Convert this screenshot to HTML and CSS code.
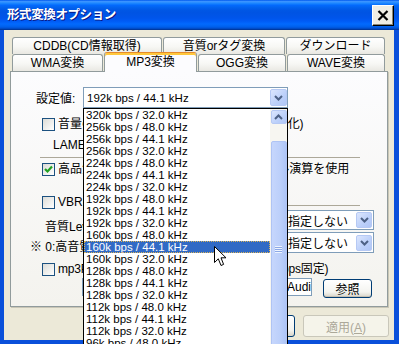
FILE: index.html
```html
<!DOCTYPE html>
<html>
<head>
<meta charset="utf-8">
<title>形式変換オプション</title>
<link rel="stylesheet" href="styles.css">
</head>
<body>
<div class="window">
  <div class="titlebar">
    <span class="title">形式変換オプション</span>
    <span class="close-btn">
      <svg width="12" height="11" viewBox="0 0 12 11"><path d="M1.5 1 L10.5 10 M10.5 1 L1.5 10" stroke="#000" stroke-width="2.2"/></svg>
    </span>
  </div>

  <div class="client">
    <div class="tabs">
      <div class="tab-row">
        <div class="tab w-cddb">CDDB(CD情報取得)</div>
        <div class="tab w-tag">音質orタグ変換</div>
        <div class="tab w-dl">ダウンロード</div>
      </div>
      <div class="tab-row">
        <div class="tab w-wma">WMA変換</div>
        <div class="tab w-mp3 active">MP3変換</div>
        <div class="tab w-ogg">OGG変換</div>
        <div class="tab w-wave">WAVE変換</div>
      </div>
    </div>

    <div class="panel">
      <div class="setting-row">
        <span class="setting-label">設定値:</span>
        <div class="combo combo-main">
          <span class="combo-text">192k bps / 44.1 kHz</span>
          <span class="combo-arrow"><svg width="9" height="6" viewBox="0 0 9 6"><path d="M1 1 L4.5 4.5 L8 1" stroke="#4D6185" stroke-width="2" fill="none"/></svg></span>
        </div>
      </div>

      <div class="check-row row-normalize">
        <span class="check"></span>
        <span class="check-text tight">音量の正規化処理を自動実行(ノーマライズ化)</span>
      </div>

      <div class="group-label">LAMEエンコーダ設定</div>
      <div class="sep"></div>

      <div class="check-row row-quality">
        <span class="check checked"><svg width="11" height="11" viewBox="0 0 11 11"><path d="M2 5 L4.5 7.5 L9 2.5" stroke="#21A121" stroke-width="2.2" fill="none"/></svg></span>
        <span class="check-text">高品質モードで変換する 浮動小数点のフル演算を使用</span>
      </div>

      <div class="check-row row-vbr">
        <span class="check"></span>
        <span class="check-text">VBR(可変ビットレート)</span>
        <span class="sep-fill"></span>
      </div>

      <div class="level-block">
        <div class="level-labels">
          <div class="level-label">音質Level (VBR時)</div>
          <div class="level-note">※ 0:高音質 ～ 9:低音質</div>
        </div>
        <div class="level-combos">
          <div class="combo combo-small">
            <span class="combo-text">指定しない</span>
            <span class="combo-arrow"><svg width="9" height="6" viewBox="0 0 9 6"><path d="M1 1 L4.5 4.5 L8 1" stroke="#4D6185" stroke-width="2" fill="none"/></svg></span>
          </div>
          <div class="combo combo-small tall">
            <span class="combo-text">指定しない</span>
            <span class="combo-arrow"><svg width="9" height="6" viewBox="0 0 9 6"><path d="M1 1 L4.5 4.5 L8 1" stroke="#4D6185" stroke-width="2" fill="none"/></svg></span>
          </div>
        </div>
      </div>

      <div class="check-row row-mp3pro">
        <span class="check"></span>
        <span class="check-text snug">mp3PROでエンコード(ビットレートは64kbps固定)</span>
      </div>

      <div class="path-row">
        <div class="path-input"><span>C:\Program Files\Thomson\mp3PRO Audi</span></div>
        <button class="btn btn-browse">参照</button>
      </div>
    </div>

    <div class="buttons">
      <button class="btn">OK</button>
      <button class="btn">キャンセル</button>
      <button class="btn disabled">適用(<u>A</u>)</button>
    </div>
  </div>

  <!-- open dropdown of 設定値 -->
  <div class="droplist">
    <div class="items">
      <div class="item">320k bps / 32.0 kHz</div>
      <div class="item">256k bps / 48.0 kHz</div>
      <div class="item">256k bps / 44.1 kHz</div>
      <div class="item">256k bps / 32.0 kHz</div>
      <div class="item">224k bps / 48.0 kHz</div>
      <div class="item">224k bps / 44.1 kHz</div>
      <div class="item">224k bps / 32.0 kHz</div>
      <div class="item">192k bps / 48.0 kHz</div>
      <div class="item">192k bps / 44.1 kHz</div>
      <div class="item">192k bps / 32.0 kHz</div>
      <div class="item">160k bps / 48.0 kHz</div>
      <div class="item selected">160k bps / 44.1 kHz</div>
      <div class="item">160k bps / 32.0 kHz</div>
      <div class="item">128k bps / 48.0 kHz</div>
      <div class="item">128k bps / 44.1 kHz</div>
      <div class="item">128k bps / 32.0 kHz</div>
      <div class="item">112k bps / 48.0 kHz</div>
      <div class="item">112k bps / 44.1 kHz</div>
      <div class="item">112k bps / 32.0 kHz</div>
      <div class="item">96k bps / 48.0 kHz</div>
    </div>
    <div class="scrollbar">
      <div class="sb-up"><svg width="9" height="6" viewBox="0 0 9 6"><path d="M1 5 L4.5 1.5 L8 5" stroke="#4D6185" stroke-width="2" fill="none"/></svg></div>
      <div class="sb-thumb"><span class="grip"></span></div>
    </div>
  </div>

  <svg class="cursor" width="13" height="21" viewBox="0 0 13 21">
    <path d="M0.5 0.5 L0.5 16.5 L4.3 12.8 L7 19.5 L9.6 18.4 L7 11.8 L12 11.8 Z" fill="#fff" stroke="#000" stroke-width="1"/>
  </svg>
</div>
</body>
</html>
```

FILE: styles.css
```css
body {
    margin: 0;
    font-family: "Liberation Sans", "Noto Sans CJK JP", sans-serif;
    font-size: 12px;
    color: #000;
}

.window {
    position: relative;
    width: 399px;
    height: 344px;
    overflow: hidden;
    background: #0A50DA;
    display: flex;
    flex-direction: column;
}

/* title bar */
.titlebar {
    height: 30px;
    flex: none;
    display: flex;
    align-items: flex-start;
    background: linear-gradient(#0058EE 0%, #3A93FF 5%, #288EFF 9%, #127DFF 13%, #0369FC 18%, #0262EE 25%, #0057E5 34%, #0054E3 42%, #0055EB 60%, #005BF5 70%, #026AFE 80%, #0062EF 88%, #0052D6 94%, #0040AB 97%, #003092 100%);
}

.title {
    color: #fff;
    font-family: "Noto Sans CJK JP", sans-serif;
    font-weight: bold;
    font-size: 12.5px;
    line-height: 16px;
    padding: 6px 0 0 7px;
    letter-spacing: -0.4px;
    text-shadow: 1px 1px #0A1883;
}

.close-btn {
    margin: 5px 5px 0 auto;
    width: 22px;
    height: 21px;
    box-sizing: border-box;
    background: #EFEDE4;
    border: 1px solid #fff;
    border-right-color: #000;
    border-bottom-color: #000;
    box-shadow: inset -1px -1px #8A8778;
    display: flex;
    align-items: center;
    justify-content: center;
}

/* client area */
.client {
    flex: 1;
    margin: 0 5px 4px 4px;
    background: #ECE9D8;
    padding: 7px 6px 0;
}

.tabs {
    padding-left: 2px;
}

.tab-row {
    display: flex;
    gap: 1px;
    height: 17px;
    align-items: flex-start;
}

.tab {
    box-sizing: border-box;
    height: 17px;
    border: 1px solid #919B9C;
    border-bottom: none;
    border-radius: 3px 3px 0 0;
    background: linear-gradient(#FFFFFF, #F7F7F4 55%, #E9E8E2);
    text-align: center;
    line-height: 16px;
    white-space: nowrap;
}

.tab.active {
    position: relative;
    z-index: 2;
    height: 20px;
    margin-top: -2px;
    padding-top: 1px;
    background: #FCFCFE;
    border-top-color: #E68B2C;
    box-shadow: inset 0 2px #FFC83C;
}

.w-cddb { width: 150px; }
.w-tag { width: 122px; }
.w-dl { width: 99px; }
.w-wma { width: 91px; }
.w-mp3 { width: 93px; }
.w-ogg { width: 88px; }
.w-wave { width: 98px; }

.panel {
    box-sizing: border-box;
    height: 236px;
    border: 1px solid #919B9C;
    background: linear-gradient(#FCFCFE, #F4F3EE);
    box-shadow: 1px 1px 0 #C9C6B6;
}

/* rows inside the MP3 tab */
.setting-row {
    display: flex;
    align-items: center;
    margin-top: 15px;
    height: 21px;
}

.setting-label {
    margin-left: 25px;
    width: 47px;
    flex: none;
}

.combo {
    box-sizing: border-box;
    display: flex;
    align-items: center;
    background: #fff;
    border: 1px solid #7F9DB9;
}

.combo-main {
    width: 205px;
    height: 21px;
}

.combo-main .combo-text {
    padding-left: 3px;
    font-size: 11.5px;
}

.combo-text {
    flex: 1;
    white-space: nowrap;
    overflow: hidden;
}

.combo-arrow {
    box-sizing: border-box;
    width: 17px;
    height: 17px;
    flex: none;
    border: 1px solid #B6C9F4;
    border-radius: 2px;
    background: linear-gradient(135deg, #DCE6FD, #BCD0FA 60%, #B0C6F6);
    display: flex;
    align-items: center;
    justify-content: center;
}

.check-row {
    display: flex;
    align-items: flex-start;
    height: 13px;
    line-height: 13px;
    white-space: nowrap;
}

.check {
    box-sizing: border-box;
    width: 13px;
    height: 13px;
    flex: none;
    margin-left: 31px;
    border: 1px solid #1C5180;
    background: linear-gradient(135deg, #DCDCD7, #FFFFFF);
    display: flex;
    align-items: center;
    justify-content: center;
}

.check-text {
    margin-left: 3px;
}

.check-text.tight {
    letter-spacing: -0.1px;
}

.check-text.snug {
    letter-spacing: -0.2px;
}

.row-normalize { margin-top: 10px; }
.row-quality { margin-top: 5px; }
.row-vbr { margin-top: 20px; }
.row-mp3pro { margin-top: 9px; }

.group-label {
    margin: 8px 0 0 42px;
    height: 13px;
    line-height: 13px;
}

.sep {
    margin: 5px 0 0 29px;
    width: 320px;
    border-top: 1px solid #ACA899;
}

.sep-fill {
    flex: 1;
    margin: 9px 27px 0 4px;
    border-top: 1px solid #ACA899;
}

.level-block {
    display: flex;
    margin-top: 1px;
}

.level-labels {
    flex: 1;
    white-space: nowrap;
}

.level-label {
    margin: 10px 0 0 34px;
    line-height: 14px;
}

.level-note {
    margin: 6px 0 0 19px;
    line-height: 14px;
}

.level-combos {
    width: 89px;
    margin-right: 13px;
    display: flex;
    flex-direction: column;
    gap: 2px;
}

.combo-small {
    height: 20px;
}

.combo-small.tall {
    height: 21px;
}

.combo-small .combo-text {
    padding-left: 2px;
}

.combo-small .combo-arrow {
    width: 16px;
    height: 16px;
    margin-right: 1px;
}

.path-row {
    display: flex;
    align-items: flex-start;
    margin-top: 2px;
}

.path-input {
    box-sizing: border-box;
    width: 230px;
    height: 18px;
    margin-left: 71px;
    border: 1px solid #7F9DB9;
    background: #fff;
    display: flex;
    justify-content: flex-end;
    overflow: hidden;
    white-space: nowrap;
    line-height: 16px;
}

.btn {
    box-sizing: border-box;
    width: 86px;
    height: 22px;
    padding: 0;
    border: 1px solid #003C74;
    border-radius: 3px;
    background: linear-gradient(#FFFFFF, #F4F4F0 70%, #D8D4C8);
    font-family: "Liberation Sans", "Noto Sans CJK JP", sans-serif;
    font-size: 12px;
    color: #000;
}

.btn-browse {
    width: 49px;
    height: 19px;
    margin: 1px 0 0 11px;
    box-shadow: inset 0 -1px #C4BFB2;
}

.btn.disabled {
    border-color: #C9C7BA;
    background: #F5F4EA;
    color: #ACA899;
}

.buttons {
    display: flex;
    justify-content: flex-end;
    gap: 8px;
    margin: 8px -1px 0 0;
}

/* open dropdown list */
.droplist {
    position: absolute;
    left: 83px;
    top: 108px;
    width: 205px;
    height: 250px;
    box-sizing: border-box;
    border: 1px solid #000;
    background: #fff;
    display: flex;
    z-index: 5;
}

.items {
    flex: 1;
    overflow: hidden;
    font-size: 11.5px;
}

.item {
    height: 12px;
    line-height: 12px;
    padding-left: 2px;
    white-space: nowrap;
}

.item.selected {
    background: #316AC5;
    color: #fff;
    outline: 1px dotted #D9B35A;
    outline-offset: -1px;
}

.scrollbar {
    width: 17px;
    flex: none;
    background: #F7F6F1;
    display: flex;
    flex-direction: column;
    align-items: center;
}

.sb-up {
    box-sizing: border-box;
    width: 16px;
    height: 15px;
    margin-top: 1px;
    border: 1px solid #B6C9F4;
    border-radius: 2px;
    background: linear-gradient(135deg, #DCE6FD, #BCD0FA 60%, #B0C6F6);
    display: flex;
    align-items: center;
    justify-content: center;
}

.sb-thumb {
    box-sizing: border-box;
    width: 16px;
    height: 232px;
    margin-top: 17px;
    border: 1px solid #AFC4F4;
    border-radius: 2px;
    background: linear-gradient(90deg, #C6D6FC, #BBCFFA 60%, #AEC5F7);
    display: flex;
    align-items: center;
    justify-content: center;
}

.grip {
    width: 7px;
    height: 7px;
    background: repeating-linear-gradient(#EEF4FE 0 1px, #8CA8E6 1px 2px);
}

.cursor {
    position: absolute;
    left: 214px;
    top: 246px;
    z-index: 6;
}
```
